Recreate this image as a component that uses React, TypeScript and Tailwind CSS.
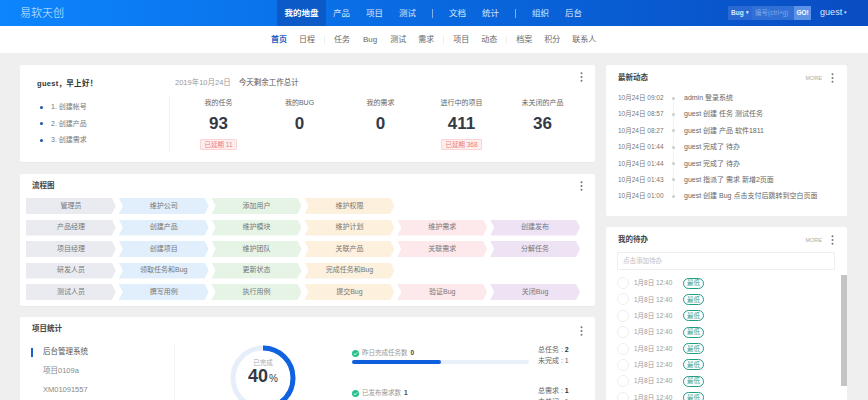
import React from "react";

const nav1 = ["产品", "项目", "测试"];
const nav2 = ["文档", "统计"];
const nav3 = ["组织", "后台"];

const Dots = () => (
  <svg width="3" height="10" viewBox="0 0 3 10" className="block">
    <circle cx="1.5" cy="1.2" r="1" fill="#777" />
    <circle cx="1.5" cy="5" r="1" fill="#777" />
    <circle cx="1.5" cy="8.8" r="1" fill="#777" />
  </svg>
);

const stats = [
  { label: "我的任务", value: "93", badge: "已延期 11" },
  { label: "我的BUG", value: "0" },
  { label: "我的需求", value: "0" },
  { label: "进行中的项目", value: "411", badge: "已延期 368" },
  { label: "未关闭的产品", value: "36" },
];

const flowRows = [
  ["管理员", "维护公司", "添加用户", "维护权限", "", ""],
  ["产品经理", "创建产品", "维护模块", "维护计划", "维护需求", "创建发布"],
  ["项目经理", "创建项目", "维护团队", "关联产品", "关联需求", "分解任务"],
  ["研发人员", "领取任务和Bug", "更新状态", "完成任务和Bug", "", ""],
  ["测试人员", "撰写用例", "执行用例", "提交Bug", "验证Bug", "关闭Bug"],
];
const colBg = ["bg-[#e9ebf1]", "bg-[#e1effc]", "bg-[#e6f4e6]", "bg-[#fdf0dc]", "bg-[#fde8ec]", "bg-[#eee3f5]"];

const feed = [
  ["10月24日 09:02", "admin 登录系统"],
  ["10月24日 08:57", "guest 创建 任务 测试任务"],
  ["10月24日 08:27", "guest 创建 产品 软件1811"],
  ["10月24日 01:44", "guest 完成了 待办"],
  ["10月24日 01:44", "guest 完成了 待办"],
  ["10月24日 01:43", "guest 指派了 需求 新增2页面"],
  ["10月24日 01:00", "guest 创建 Bug 点击支付后跳转到空白页面"],
];

const Check = () => (
  <svg width="7" height="7" viewBox="0 0 14 14" className="shrink-0">
    <circle cx="7" cy="7" r="7" fill="#22c08a" />
    <path d="M3.5 7.2 6 9.6 10.6 4.8" fill="none" stroke="#fff" strokeWidth="1.8" />
  </svg>
);

export default function App() {
  return (
    <div className="w-[868px] h-[400px] overflow-hidden bg-[#efefef] font-['Liberation_Sans','Noto_Sans_CJK_SC',sans-serif] text-[8px] text-[#666]">
      <header className="h-[26px] flex items-center bg-gradient-to-r from-[#0d85fd] to-[#0a4cc2] text-[#d8e8fb]">
        <div className="w-[277px] pl-[20px] text-[11px] text-[#dbeafe] font-light">易软天创</div>
        <div className="w-[49px] h-full bg-[#0b5ac8] flex items-center justify-center text-[8.5px] font-bold text-white">我的地盘</div>
        <div className="flex items-center gap-[16px] pl-[7px] text-[8.5px]">
          {nav1.map((n) => <span key={n}>{n}</span>)}
          <i className="w-px h-[9px] bg-[#7fb0ee]" />
          {nav2.map((n) => <span key={n}>{n}</span>)}
          <i className="w-px h-[9px] bg-[#7fb0ee]" />
          {nav3.map((n) => <span key={n}>{n}</span>)}
        </div>
        <div className="ml-[146px] flex items-center h-[14px] w-[83px] bg-[#2f6fd6] text-[6.5px]">
          <span className="w-[24px] pl-[3px] font-bold text-[#dbe8fb] flex items-center gap-[2px] bg-[#2a69d3] h-full">Bug <span className="text-[5px]">▾</span></span>
          <span className="flex-1 text-[#7fa9e6] pl-[3px]">编号(ctrl+g)</span>
          <span className="w-[17px] h-full bg-[#5d93e6] text-white font-bold flex items-center justify-center">GO!</span>
        </div>
        <span className="ml-[9px] text-[9px] text-[#dbe8fb]">guest<span className="text-[5px] align-middle"> ▾</span></span>
      </header>

      <nav className="h-[27px] bg-white flex items-center pl-[271px] gap-[12px] text-[8px] text-[#666]">
        <span className="text-[#1c5fc4] font-bold">首页</span>
        <span>日程</span>
        <i className="w-px h-[8px] bg-[#eee] -mx-[3px]" />
        <span>任务</span>
        <span className="px-[1px]">Bug</span>
        <span>测试</span>
        <span>需求</span>
        <i className="w-px h-[8px] bg-[#eee] -mx-[3px]" />
        <span>项目</span>
        <span>动态</span>
        <i className="w-px h-[8px] bg-[#eee] -mx-[3px]" />
        <span>档案</span>
        <span>积分</span>
        <span>联系人</span>
      </nav>

      <main className="flex gap-[11px] pl-[20px] pt-[12px] items-start">
        <div className="w-[575px] flex flex-col">
          {/* welcome */}
          <section className="h-[97px] bg-white rounded-[2px] flex relative shadow-[0_1px_1px_rgba(0,0,0,0.03)]">
            <div className="w-[149px] shrink-0 pl-[17px] pt-[13px]">
              <div className="text-[7.5px] font-bold text-[#333] tracking-[0.3px]">guest，早上好！</div>
              <ul className="mt-[14px] flex flex-col gap-[8.5px] text-[7px] text-[#777]">
                {["1. 创建帐号", "2. 创建产品", "3. 创建需求"].map((t) => (
                  <li key={t} className="flex items-center h-[8px]">
                    <i className="w-[3px] h-[3px] rounded-full bg-[#1c4fa8] ml-[3px] mr-[8px]" />
                    {t}
                  </li>
                ))}
              </ul>
            </div>
            <div className="flex-1 pt-[12px] relative">
              <div className="pl-[6px] text-[7.5px] h-[12px] flex items-center">
                <span className="text-[#999]">2019年10月24日</span>
                <span className="ml-[8px] text-[#555]">今天剩余工作总计</span>
              </div>
              <div className="mt-[7px] border-l border-[#f2f2f2] h-[56px] flex pl-[8px]">
                {stats.map((s) => (
                  <div key={s.label} className="w-[81px] flex flex-col items-center">
                    <div className="text-[7px] text-[#666] h-[10px] leading-[10px] mt-[2px]">{s.label}</div>
                    <div className="text-[17px] leading-[20px] font-bold text-[#333a46] mt-[6px]">{s.value}</div>
                    {s.badge && (
                      <div className="mt-[5px] h-[11px] px-[3px] flex items-center bg-[#fdeeee] border border-[#fbd5d5] text-[6.5px] text-[#f0797c] rounded-[1px]">{s.badge}</div>
                    )}
                  </div>
                ))}
              </div>
            </div>
            <div className="absolute right-[12px] top-[7px]"><Dots /></div>
          </section>

          {/* flow */}
          <section className="mt-[12px] h-[132px] bg-white rounded-[2px] relative px-[6px] pt-[7px] shadow-[0_1px_1px_rgba(0,0,0,0.03)]">
            <div className="pl-[6px] h-[10px] leading-[10px] text-[7.5px] font-bold text-[#444]">流程图</div>
            <div className="mt-[7px] grid grid-cols-6 gap-x-[3px] gap-y-[5.5px] w-[554px]">
              {flowRows.flatMap((r, ri) =>
                r.map((c, ci) =>
                  c ? (
                    <div
                      key={ri + "-" + ci}
                      className={
                        "h-[16px] flex items-center justify-center text-[7px] text-[#777] " +
                        colBg[ci] +
                        (ci === 0
                          ? " [clip-path:polygon(0_0,calc(100%-4px)_0,100%_50%,calc(100%-4px)_100%,0_100%)]"
                          : " [clip-path:polygon(0_0,calc(100%-4px)_0,100%_50%,calc(100%-4px)_100%,0_100%,4px_50%)]")
                      }
                    >
                      {c}
                    </div>
                  ) : (
                    <div key={ri + "-" + ci} className="h-[16px]" />
                  )
                )
              )}
            </div>
            <div className="absolute right-[12px] top-[7px]"><Dots /></div>
          </section>

          {/* stats */}
          <section className="mt-[11px] h-[120px] bg-white rounded-[2px] relative flex shadow-[0_1px_1px_rgba(0,0,0,0.03)]">
            <div className="w-[154px] shrink-0 pt-[7px]">
              <div className="pl-[12px] h-[10px] leading-[10px] text-[7.5px] font-bold text-[#444]">项目统计</div>
              <div className="mt-[13px] flex flex-col gap-[9px] text-[7.5px] text-[#888]">
                <div className="h-[10px] flex items-center text-[#555]">
                  <i className="w-[2px] h-[9px] ml-[11px] bg-[#1c5fc4] mr-[10px]" />
                  后台管理系统
                </div>
                <div className="h-[10px] leading-[10px] pl-[23px]">项目0109a</div>
                <div className="h-[10px] leading-[10px] pl-[23px]">XM01091557</div>
              </div>
            </div>
            <div className="mt-[27px] h-[93px] border-l border-[#f5f5f5] flex-1 flex">
              <div className="w-[177px] shrink-0 pl-[55px] pt-[1px]">
                <div className="relative w-[66px] h-[66px]">
                  <svg width="66" height="66" viewBox="0 0 66 66" className="-rotate-90">
                    <circle cx="33" cy="33" r="30" fill="none" stroke="#e6eef9" strokeWidth="5" />
                    <circle cx="33" cy="33" r="30" fill="none" stroke="#0f62e0" strokeWidth="5" strokeDasharray="75.4 188.5" />
                  </svg>
                  <div className="absolute inset-0 flex flex-col items-center pt-[13px]">
                    <span className="text-[6.5px] leading-[9px] text-[#aaa]">已完成</span>
                    <span className="font-bold text-[18px] leading-[19px] text-[#333a46]">40<span className="text-[10px] font-normal ml-[1px]">%</span></span>
                  </div>
                </div>
              </div>
              <div className="flex-1 flex flex-col gap-[20px]">
                <div className="flex pt-[1px]">
                  <div className="w-[186px] shrink-0 pt-[3px]">
                    <div className="flex items-center gap-[3px] h-[10px] text-[6.5px] text-[#999]">
                      <Check /> 昨日完成任务数 <b className="text-[#444]">0</b>
                    </div>
                    <div className="mt-[2px] w-[177px] h-[4px] rounded-full bg-[#eaf0f9]">
                      <div className="w-[89px] h-full rounded-full bg-[#0f5fdc]" />
                    </div>
                  </div>
                  <div className="text-[7px] leading-[10.5px] text-[#666]">
                    <div>总任务 : <b className="text-[#333]">2</b></div>
                    <div>未完成 : 1</div>
                  </div>
                </div>
                <div className="flex">
                  <div className="w-[186px] shrink-0 pt-[2px]">
                    <div className="flex items-center gap-[3px] h-[10px] text-[6.5px] text-[#999]">
                      <Check /> 已发布需求数 <b className="text-[#444]">1</b>
                    </div>
                  </div>
                  <div className="text-[7px] leading-[10.5px] text-[#666]">
                    <div>总需求 : <b className="text-[#333]">1</b></div>
                    <div>未关闭 : 1</div>
                  </div>
                </div>
              </div>
            </div>
            <div className="absolute right-[12px] top-[9px]"><Dots /></div>
          </section>
        </div>

        <div className="w-[241px] flex flex-col gap-[11px]">
          <section className="h-[151px] bg-white rounded-[2px] px-[12px] pt-[8px]">
            <div className="flex items-center h-[10px]">
              <span className="text-[7.5px] font-bold text-[#444]">最新动态</span>
              <span className="ml-auto text-[5.5px] text-[#aaa] mr-[9px]">MORE</span>
              <span className="mr-[1px]"><Dots /></span>
            </div>
            <div className="mt-[10px] relative flex flex-col gap-[6.4px] leading-[10px] text-[#666]">
              <i className="absolute left-[55px] top-[4px] bottom-[4px] w-px bg-[#f2f2f2]" />
              {feed.map(([d, t], i) => (
                <div key={i} className="flex items-center h-[10px]">
                  <span className="w-[53px] shrink-0 whitespace-nowrap text-[6.5px] text-[#777]">{d}</span>
                  <i className="relative w-[3px] h-[3px] rounded-full bg-[#ccc] ml-[1px] mr-[9px]" />
                  <span className="whitespace-nowrap text-[7px]">{t}</span>
                </div>
              ))}
            </div>
          </section>

          <section className="h-[180px] bg-white rounded-[2px] pl-[11px] pt-[8px] flex flex-col">
            <div className="flex items-center h-[10px] pr-[12px]">
              <span className="text-[7.5px] font-bold text-[#444] pl-[1px]">我的待办</span>
              <span className="ml-auto text-[5.5px] text-[#aaa] mr-[9px]">MORE</span>
              <span className="mr-[1px]"><Dots /></span>
            </div>
            <div className="mt-[7px] w-[218px] h-[18px] border border-[#eeeeee] rounded-[1px] flex items-center pl-[5px] text-[6.5px] text-[#bbb]">点击添加待办</div>
            <div className="flex mt-[7px] flex-1 min-h-0">
              <div className="w-[224px] flex flex-col gap-[4.4px] overflow-hidden">
                {Array.from({ length: 8 }).map((_, i) => (
                  <div key={i} className="flex items-center h-[12px] shrink-0 text-[6.5px] text-[#999]">
                    <i className="w-[12px] h-[12px] rounded-full border border-[#eeeeee] shrink-0" />
                    <span className="ml-[5px] w-[49px] whitespace-nowrap">1月8日 12:40</span>
                    <span className="w-[21px] h-[11px] rounded-full border border-[#1e9e85] text-[#3a9e8a] flex items-center justify-center text-[6.5px]">最低</span>
                  </div>
                ))}
              </div>
              <div className="-mt-[2px] w-[6px] h-[111px] bg-[#c4c4c4] shrink-0" />
            </div>
          </section>
        </div>
      </main>
    </div>
  );
}
